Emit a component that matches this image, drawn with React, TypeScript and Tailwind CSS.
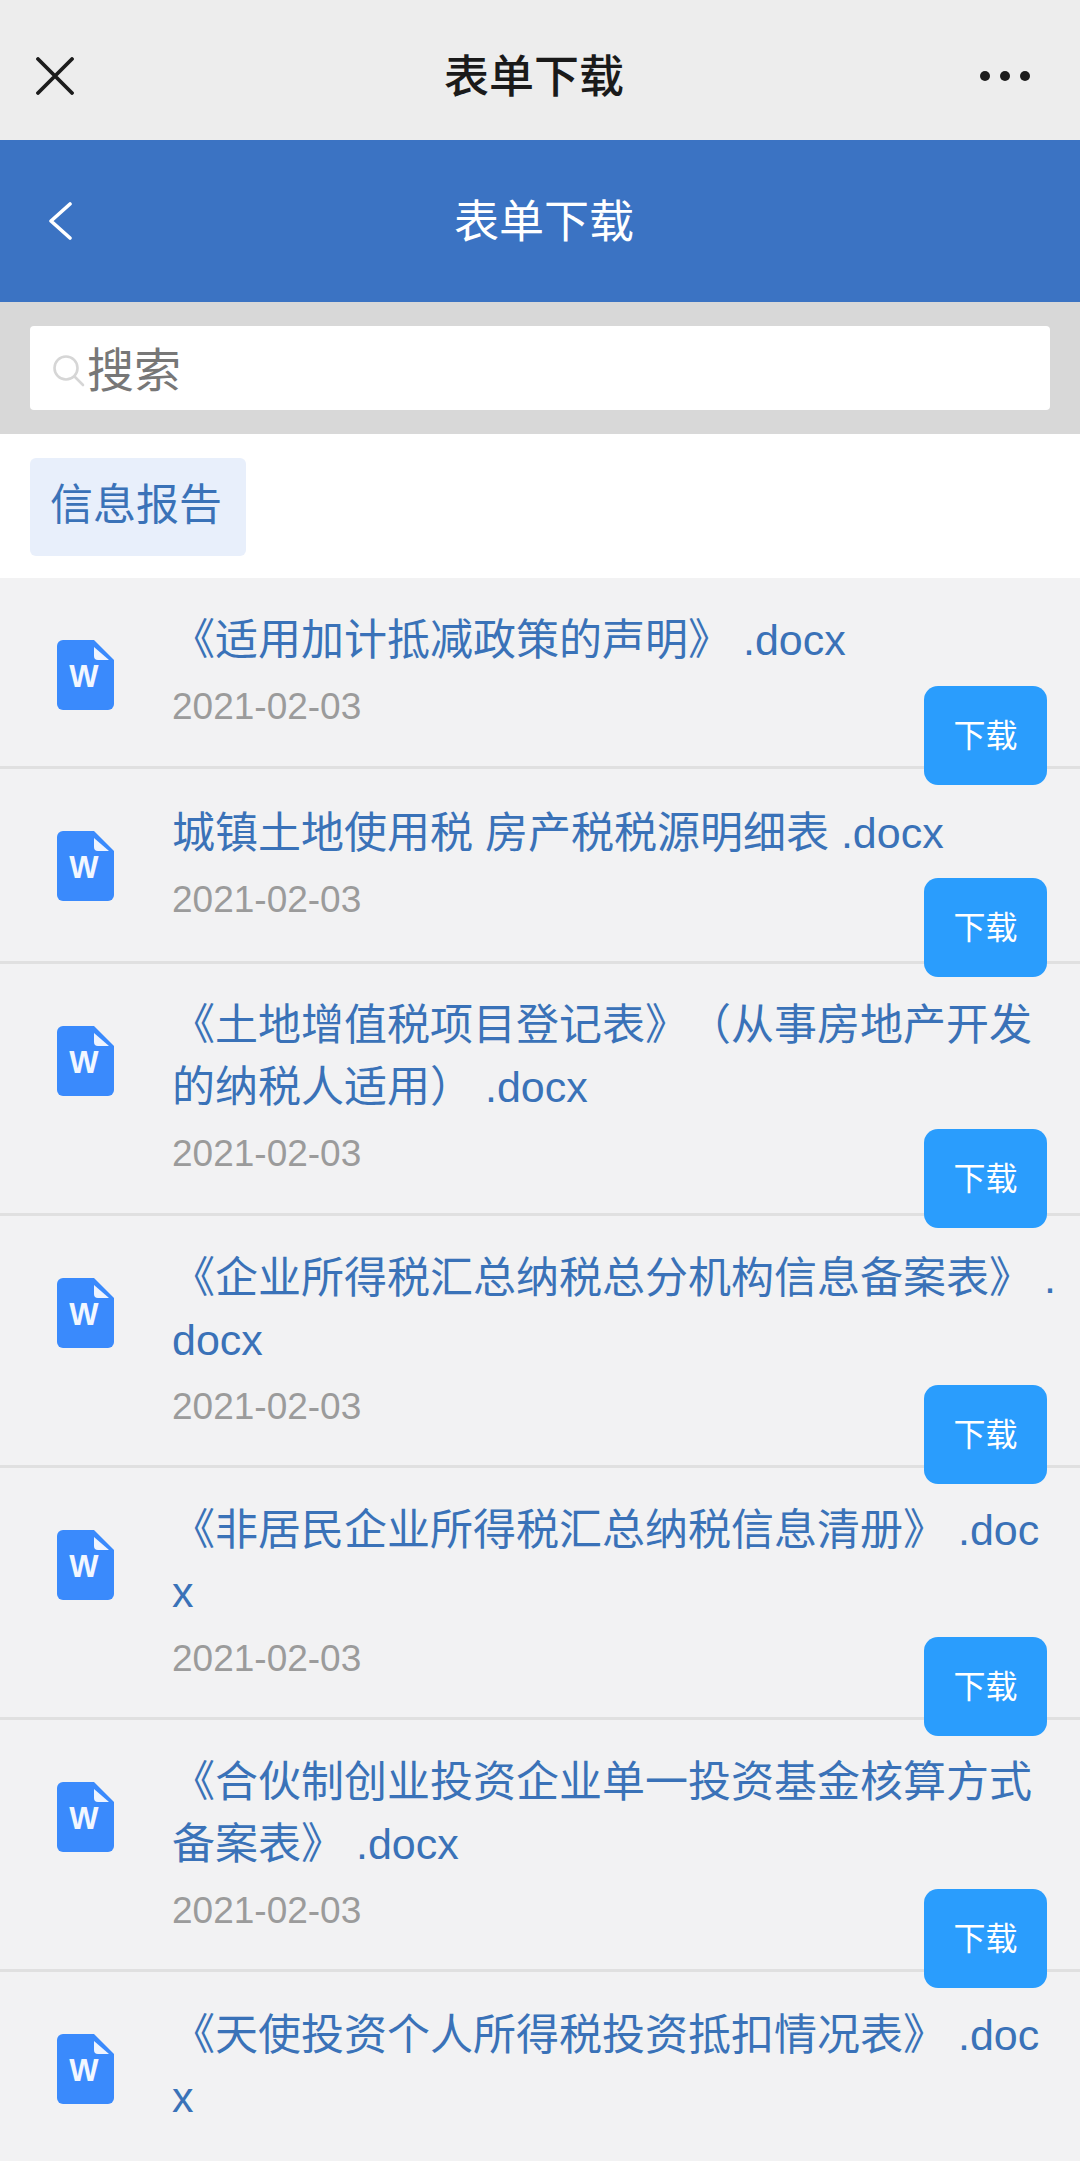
const FONT = '[font-family:"Liberation_Sans","Noto_Sans_CJK_SC",sans-serif]'

// the rows in the picture are not evenly spaced, so each keeps its own paddings
const files = [
    { name: '《适用加计抵减政策的声明》 .docx', top: 'pt-[31px]', bottom: 'pb-[39px]', btn: 'bottom-[-19px]' },
    { name: '城镇土地使用税 房产税税源明细表 .docx', top: 'pt-[33px]', bottom: 'pb-[41px]', btn: 'bottom-[-16px]' },
    { name: '《土地增值税项目登记表》（从事房地产开发的纳税人适用） .docx', top: 'pt-[30px]', bottom: 'pb-[39px]', btn: 'bottom-[-15px]' },
    { name: '《企业所得税汇总纳税总分机构信息备案表》 .docx', top: 'pt-[31px]', bottom: 'pb-[38px]', btn: 'bottom-[-19px]' },
    { name: '《非居民企业所得税汇总纳税信息清册》 .docx', top: 'pt-[31px]', bottom: 'pb-[38px]', btn: 'bottom-[-19px]' },
    { name: '《合伙制创业投资企业单一投资基金核算方式备案表》 .docx', top: 'pt-[31px]', bottom: 'pb-[38px]', btn: 'bottom-[-19px]' },
]

const WordIcon = () => (
    <svg viewBox="0 0 57 70" className="w-[57px] h-[70px] shrink-0">
        <path d="M6 0H37L57 20V64a6 6 0 0 1-6 6H6a6 6 0 0 1-6-6V6a6 6 0 0 1 6-6z" fill="#3a8afc" />
        <path d="M37 7L52 20H41a4 4 0 0 1-4-4z" fill="#eef4ff" />
        <text x="27" y="47" textAnchor="middle" fontSize="31" fontWeight="700" fill="#f2f7ff" fontFamily="Liberation Sans, sans-serif">W</text>
    </svg>
)

const App = () => {
    return (
        <div className={`w-[1080px] h-[2161px] overflow-hidden bg-[#f2f2f3] [text-spacing-trim:space-all] ${FONT}`}>
            <div className="h-[140px] pt-[11px] bg-[#ededed] flex items-center">
                <svg viewBox="0 0 38 38" className="ml-[36px] w-[38px] h-[38px]" fill="none" stroke="#1c1c1c" strokeWidth="3.800" strokeLinecap="round">
                    <path d="M2 2L36 36M36 2L2 36" />
                </svg>
                <div className="flex-1 pl-[14px] pt-[4px] text-center text-[45px] font-medium text-[#1a1a1a] leading-none">表单下载</div>
                <div className="mr-[50px] flex gap-[10px]">
                    <div className="w-[10px] h-[10px] rounded-full bg-[#1c1c1c]" />
                    <div className="w-[10px] h-[10px] rounded-full bg-[#1c1c1c]" />
                    <div className="w-[10px] h-[10px] rounded-full bg-[#1c1c1c]" />
                </div>
            </div>

            <div className="h-[162px] bg-[#3b73c3] flex items-center">
                <svg viewBox="0 0 24 38" className="ml-[48px] w-[24px] h-[38px]" fill="none" stroke="#ffffff" strokeWidth="3.600" strokeLinecap="round" strokeLinejoin="round">
                    <path d="M22 2L3 19L22 36" />
                </svg>
                <div className="flex-1 text-center text-[45px] text-white leading-none pt-[2px]">表单下载</div>
                <div className="w-[64px]" />
            </div>

            <div className="h-[132px] bg-[#d8d8d8] px-[30px] pt-[24px]">
                <div className="h-[84px] bg-white rounded-[4px] flex items-center pl-[23px]">
                    <svg viewBox="0 0 32 32" className="w-[32px] h-[32px] mt-[6px] shrink-0" fill="none" stroke="#d6d6d6" strokeWidth="2.600" strokeLinecap="round">
                        <circle cx="13" cy="13" r="11.500" />
                        <path d="M21.500 21.500L30 30" />
                    </svg>
                    <span className="ml-[2px] pt-[4px] text-[47px] text-[#777777] leading-none">搜索</span>
                </div>
            </div>

            <div className="h-[144px] bg-white px-[30px] pt-[24px]">
                <div className="w-[216px] h-[98px] pr-[4px] pb-[3px] bg-[#e8effb] rounded-[6px] flex items-center justify-center text-[43px] text-[#3a72b8] leading-none">信息报告</div>
            </div>

            {files.map((file) => (
                <div key={file.name} className={`relative flex pl-[57px] border-b-[3px] border-[#e0e0e0] ${file.top} ${file.bottom}`}>
                    <div className="w-[57px]" />
                    <div className="ml-[58px] w-[888px]">
                        <div className="text-[43px] leading-[62px] text-[#3a72b8] break-all">{file.name}</div>
                        <div className="mt-[16px] text-[37px] leading-[40px] text-[#9b9b9b]">2021-02-03</div>
                    </div>
                    <div className="absolute left-[57px] top-[62px]"><WordIcon /></div>
                    <button className={`absolute right-[33px] z-10 w-[123px] h-[99px] rounded-[14px] bg-[#2a9dfd] text-white text-[32px] ${file.btn}`}>下载</button>
                </div>
            ))}

            <div className="flex pl-[57px] pt-[32px]">
                <div className="mt-[30px]"><WordIcon /></div>
                <div className="ml-[58px] w-[888px] text-[43px] leading-[62px] text-[#3a72b8] break-all">《天使投资个人所得税投资抵扣情况表》 .docx</div>
            </div>
        </div>
    )
}

export default App
